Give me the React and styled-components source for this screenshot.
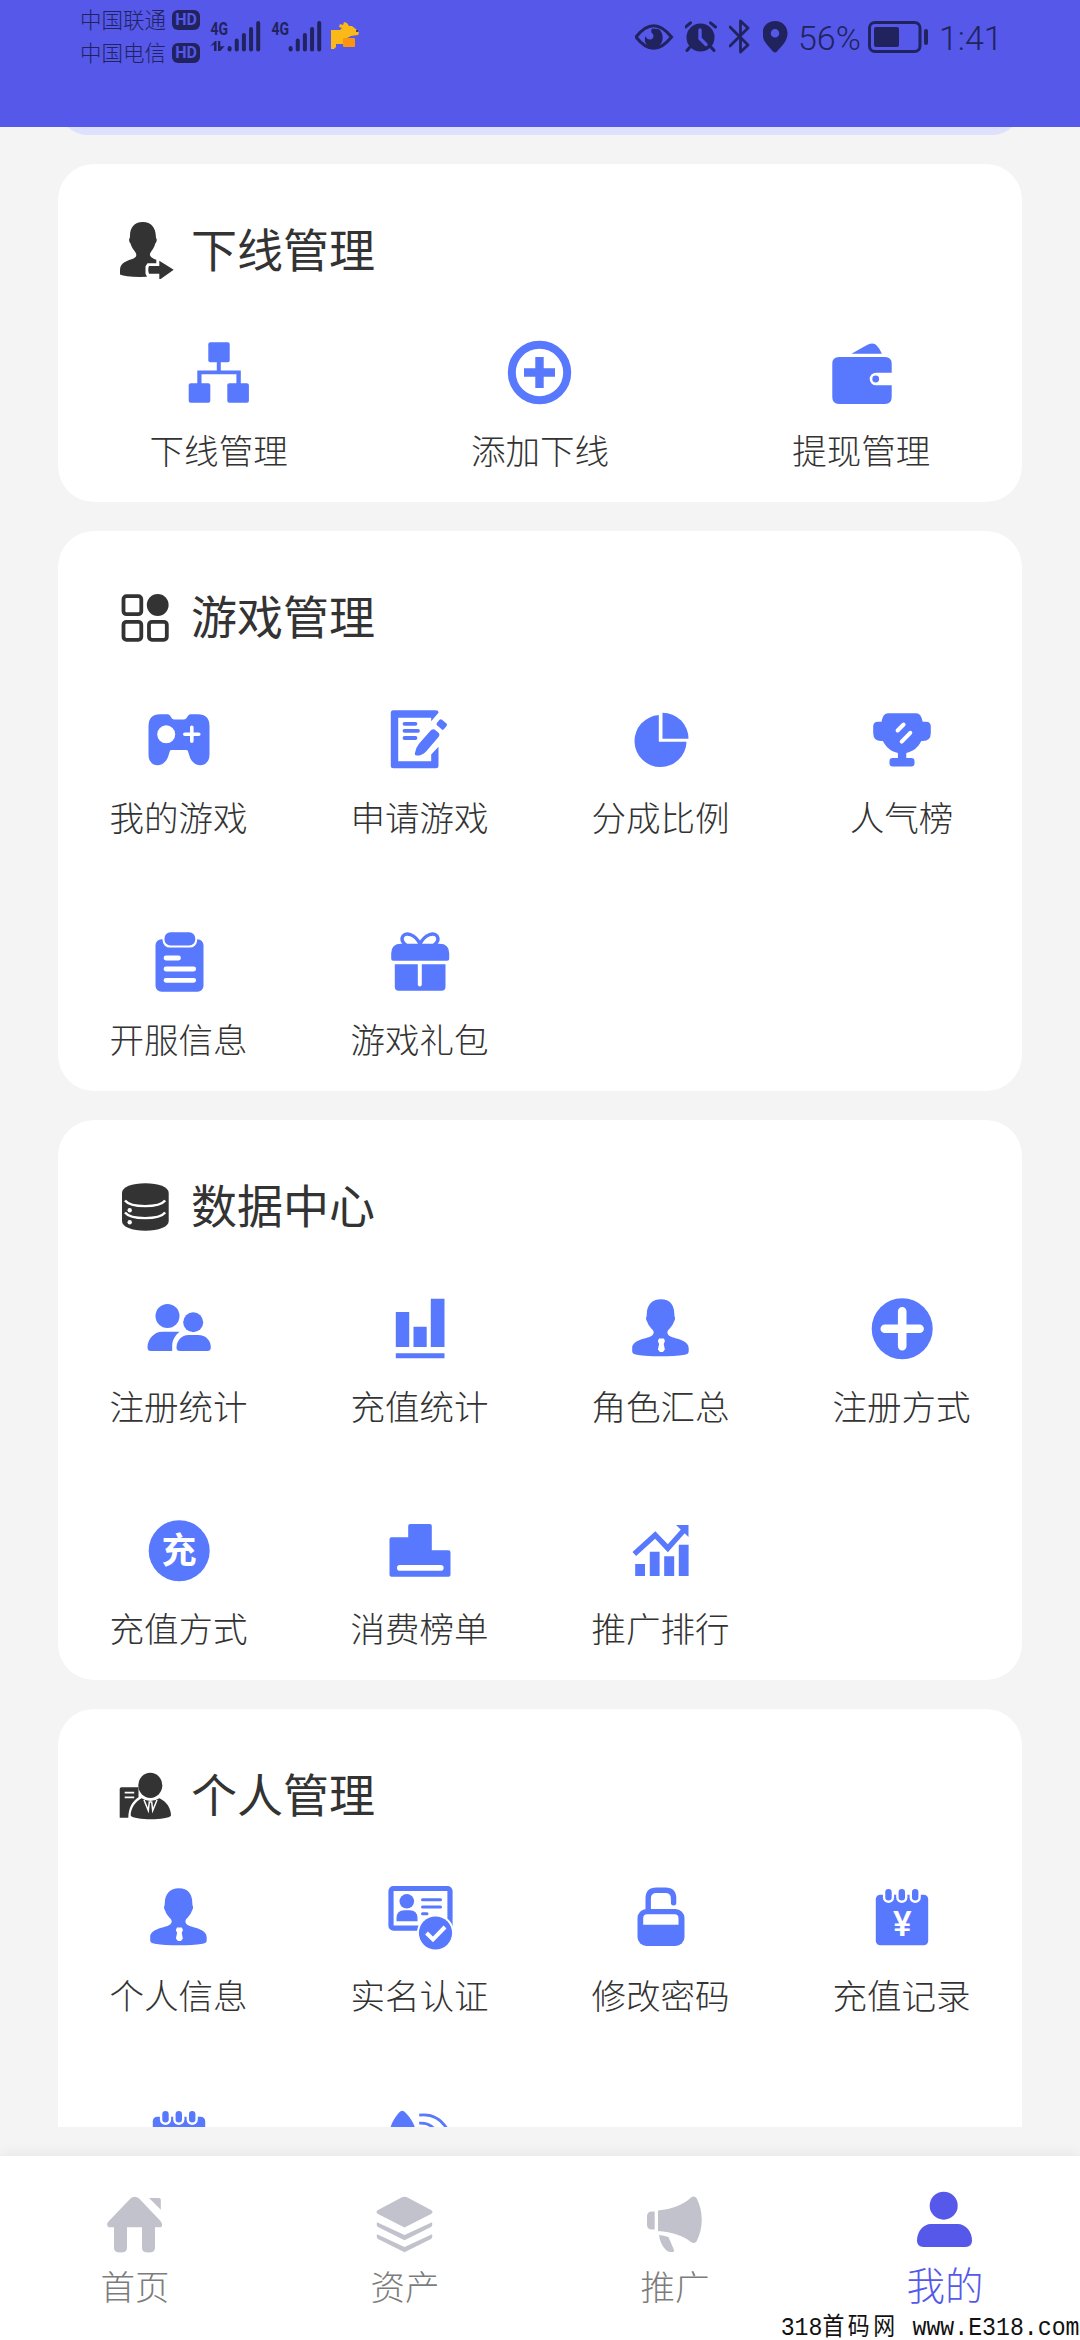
import styled, { createGlobalStyle, ThemeProvider } from 'styled-components'

const theme = {
  brand: '#5558e8',
  icon: '#5878fd',
  ink: '#333333',
  status: '#21235f',
  body: '#f4f4f4',
  muted: '#7c7c7c',
  tabIcon: '#c2c2cc'
}

const GlobalStyle = createGlobalStyle`
  * {
    box-sizing: border-box;
  }

  body {
    margin: 0;
    background: ${theme.body};
    font-family: 'Noto Sans CJK SC', sans-serif;
    color: ${theme.ink};
  }
`

const Screen = styled.div`
  display: flex;
  flex-direction: column;
  width: 1080px;
  height: 2340px;
  overflow: hidden;
`

const Header = styled.header`
  display: flex;
  flex: none;
  justify-content: space-between;
  align-items: flex-start;
  height: 127px;
  padding: 0 79px 0 80px;
  background: ${({ theme }) => theme.brand};
  color: ${({ theme }) => theme.status};
`

const StatusGroup = styled.div`
  display: flex;
  align-items: center;
  height: 73px;
`

const Carriers = styled.div`
  display: flex;
  flex-direction: column;
  margin-right: 10px;
`

const Carrier = styled.div`
  display: flex;
  align-items: center;
  gap: 6px;
  height: 33px;
  font-size: 21.5px;
  font-weight: 300;
  line-height: 30px;
  padding-bottom: 3px;
`

const Hd = styled.span`
  width: 28px;
  height: 20px;
  margin-top: 3px;
  border-radius: 6px;
  background: ${({ theme }) => theme.status};
  color: ${({ theme }) => theme.brand};
  font: 700 16px/20px Roboto, sans-serif;
  text-align: center;
`

const StatusText = styled.span`
  width: ${({ $width }) => $width}px;
  margin: 2px 6px 0 ${({ $gap }) => $gap}px;
  font: 300 34px/40px Roboto, sans-serif;
  white-space: nowrap;
`

const StatusSvg = styled.svg`
  flex: none;
  margin-right: ${({ $gap }) => $gap || 0}px;
  fill: ${({ theme }) => theme.status};
`

const Content = styled.main`
  display: flex;
  flex: none;
  flex-direction: column;
  gap: 29px;
  height: 2000px;
  padding: 0 58px;
  overflow: hidden;
`

// bottom edge of the balance card that is scrolled under the header
const ScrolledCard = styled.div`
  flex: none;
  height: 60px;
  margin-top: -52px;
  border-radius: 36px;
  background: #dde1fb;
`

const Card = styled.section`
  flex: none;
  border-radius: 36px;
  background: #fff;
`

const CardHead = styled.div`
  display: flex;
  align-items: center;
  gap: 17px;
  height: 116px;
  padding: 56px 58px 0;
`

const CardTitle = styled.h2`
  margin: 0;
  padding-bottom: 6px;
  font-size: 46px;
  font-weight: 400;
  line-height: 54px;
`

const HeadSvg = styled.svg`
  flex: none;
  width: 58px;
  height: 58px;
  fill: ${({ theme }) => theme.ink};
`

const Grid = styled.div`
  display: grid;
  grid-template-columns: repeat(${({ $columns }) => $columns}, 1fr);
  grid-auto-rows: 222px;
`

const Item = styled.a`
  display: flex;
  flex-direction: column;
  align-items: center;
  gap: 15px;
  padding-top: 57px;
`

const ItemSvg = styled.svg`
  flex: none;
  width: 72px;
  height: 72px;
  fill: ${({ theme }) => theme.icon};
`

const ItemLabel = styled.span`
  font-size: 34.56px;
  font-weight: 300;
  line-height: 50px;
  white-space: nowrap;
`

const TabBar = styled.nav`
  position: relative;
  display: grid;
  flex: none;
  grid-template-columns: repeat(4, 1fr);
  height: 184px;
  margin-top: 29px;
  background: #fff;
  box-shadow: 0 -2px 14px rgba(0, 0, 0, 0.06);
`

const Tab = styled.a`
  display: flex;
  flex-direction: column;
  align-items: center;
  padding-top: 34px;
  color: ${({ theme, $active }) => $active ? theme.brand : theme.muted};
  font-size: ${({ $active }) => $active ? 38.5 : 34.5}px;
  font-weight: 300;
  line-height: ${({ $active }) => $active ? 58 : 63}px;

  & svg {
    flex: none;
    width: 60px;
    height: 64px;
    fill: ${({ theme, $active }) => $active ? theme.brand : theme.tabIcon};
  }
`

const Watermark = styled.div`
  position: absolute;
  right: 1px;
  bottom: 0;
  display: flex;
  align-items: baseline;
  color: #111;
  font: 26.500px/24px 'Liberation Mono', monospace;
  white-space: pre;
  transform: scaleX(0.875);
  transform-origin: right;

  & b {
    font: 400 25px/24px 'Noto Sans CJK SC', sans-serif;
    letter-spacing: 4px;
  }
`

const BUST = 'M36 6.3c-9 0-14.2 6-14.2 14.5l-.2 2.6c-1 .8-.7 3.4.6 5.4 1.2 4 3.800 6.200 5.600 8.200 1.800 2.400.8 5.300-2.800 6.700-6 2.300-17.800 3.600-17.800 11.500v3c0 2.300 2 3 4.500 3.500 7 1.200 15 1.600 24 1.600s17-.4 24-1.600c2.500-.5 4-1.200 4-3.500v-3c0-7.900-11.800-9.200-17.600-11.500-3.600-1.400-4.600-4.300-2.800-6.700 1.800-2 4.400-4.200 5.600-8.200 1.300-2 1.600-4.600.6-5.400l-.2-2.600C49.300 12.300 45 6.300 36 6.300z'

function Bust () {
  return (
    <>
      <path d={BUST} />
      <path fill='#fff' d='M34 45.500h4.800l1.200 2.500-1.300 3 1.200 5.500-2 2.500h-3l-2-2.500 1.200-5.500-1.300-3z' />
    </>
  )
}

function Notepad () {
  return (
    <>
      <rect x='9.800' y='12.800' width='52.400' height='50.400' rx='4.500' />
      {[22.5, 35.8, 49.2].map(x => (
        <g key={x}>
          <rect x={x - 5.6} y='4' width='11.200' height='17' rx='5.600' fill='#fff' />
          <rect x={x - 3.2} y='7' width='6.400' height='11.500' rx='3.200' />
        </g>
      ))}
    </>
  )
}

const icons = {
  tree: (
    <>
      <rect x='25.300' y='5.300' width='21.400' height='20' rx='2' />
      <rect x='5.700' y='46.300' width='21.600' height='19.400' rx='2' />
      <rect x='44.300' y='46.300' width='21.600' height='19.400' rx='2' />
      <path d='M33.800 24h4v9.400h20V47h-4.400v-9.700H18.500V47h-4.200V33.400h19.500z' />
    </>
  ),
  plusRing: (
    <>
      <circle cx='35.500' cy='35.500' r='27.700' fill='none' stroke='#5878fd' strokeWidth='8' />
      <path d='M31.300 20h8.400v11.300H51v8.400H39.700V51h-8.400V39.700H20v-8.400h11.300z' />
    </>
  ),
  wallet: (
    <>
      <path d='M14 20h46q6.700 0 6.700 6.700v9H51a6.300 6.300 0 0 0 0 12.600h15.700V60q0 7-6.700 7H14q-6.700 0-6.700-7V26.700Q7.300 20 14 20z' />
      <circle cx='50.700' cy='42' r='3.400' />
      <path d='M26.400 16.800 42.500 7.800q6-2.800 9 .5 3 3 5.400 8.500z' />
    </>
  ),
  gamepad: (
    <>
      <path d='M17 10.300h7.500c3.500 0 3 5.200 7 5.200h9.200c4 0 3.500-5.200 7-5.200H55q11.500 0 11.500 12v28.500c0 13.500-17 14-20.300.5l-1.300-4.200q-.4-1.100-1.700-1.100H28.500q-1.300 0-1.600 1.100l-1.300 4.200C22 64.800 5.500 64.300 5.500 50.800V22.300q0-12 11.500-12z' />
      <circle cx='23.200' cy='30.300' r='9' fill='#fff' />
      <path d='M48.800 23.300v14M41.800 30.300h14' stroke='#fff' strokeWidth='3.600' strokeLinecap='round' />
    </>
  ),
  apply: (
    <>
      <path d='M9.300 6.300h42.500q3 0 2.700 2.400l-7.300 8.500v-3.500h-33v43.600h33V50.500l7.300-7.700v19q0 2.500-2.700 2.500H9.300q-2.500 0-2.500-2.500v-53q0-2.500 2.500-2.500z' />
      <path d='M20.500 19.800h11M20.500 26.800H34M20.500 34h11' stroke='#5878fd' strokeWidth='3.800' strokeLinecap='round' />
      <path d='M46.200 27q2.500-3 5.300-.8l3 2.600q1.800 1.700 0 4.200L42.300 47.200Q38 51.800 32.500 51.600q-2-.2-1.700-2.200.8-5.400 4-9.400z' />
      <path d='M55.500 15.800q1.200-1.200 2.500 0l4.500 3.800q1 1 .1 2.300l-2.800 3.300q-1 1-2.200 0L53 21.300q-1-1-.1-2.300z' />
    </>
  ),
  pie: (
    <>
      <path d='M33.800 11.100v26.600h27.700A26 26 0 1 1 33.800 11.100z' />
      <path d='M37.500 8.700a26 26 0 0 1 26 26h-26z' />
    </>
  ),
  trophy: (
    <>
      <path d='M22 9.300h28.400q4.500 0 6.300 8.400H60q4.800 0 4.800 4.800V29q0 8-8 8h-1.500c-3.500 7-8 10-15 12v5h5q3.200 0 3.200 3.200v2q0 3.200-3.200 3.200H26.700q-3.200 0-3.200-3.200v-2q0-3.200 3.200-3.200h5.200v-5c-6.500-1.500-11.500-5-15-12h-1.700q-8 0-8-8v-6.500q0-4.800 4.800-4.800h3.500q1.500-8.400 6.500-8.400z' />
      <path d='m31.600 26.500 6-6M35.700 37.600l8.600-8.800' stroke='#fff' strokeWidth='4' strokeLinecap='round' />
    </>
  ),
  clipboard: (
    <>
      <rect x='12.500' y='13.300' width='48' height='52.400' rx='6' />
      <rect x='19.500' y='4.300' width='34.700' height='17.300' rx='7.500' fill='#fff' />
      <rect x='21.500' y='6.300' width='30.700' height='13.200' rx='6' />
      <path d='M23 32h12.500M23 43h27.700M23 54.300h27.700' stroke='#fff' strokeWidth='4.800' strokeLinecap='round' />
    </>
  ),
  gift: (
    <>
      <path d='M17 17.700h38.500q9.700 0 9.700 9.700v5.300q0 2-2 2h-54q-2 0-2-2v-5.300q0-9.700 9.800-9.700z' />
      <path d='M10.800 38.300h23v20.700q2 3 4 0V38.300h23.700v22.400q0 4-4 4h-42.700q-4 0-4-4z' />
      <path d='M36 18C31 8 22 6 19 10q-3 4.500 3 9M36 18C41 8 50 6 53 10q3 4.500-3 9' fill='none' stroke='#5878fd' strokeWidth='3.400' />
    </>
  ),
  users: (
    <>
      <circle cx='24.500' cy='23' r='12' />
      <circle cx='50.200' cy='29.300' r='10' />
      <path d='M19.500 38.700h17.200c-4.500 3.500-7.500 8.300-7.500 14V58H8q-3.500 0-3.500-3.500c0-8 6-15.800 15-15.800z' />
      <path d='M45.500 42H55c8 0 12.800 5.500 12.800 12.500Q67.800 58 64 58H37q-3.500 0-3.500-3.500C33.500 48 38.500 42 45.500 42z' />
    </>
  ),
  bars: <path d='M11.800 19h13.400v35H11.800zM29.500 33.700h13.200V54H29.500zM46.800 5.700h13.700V54H46.800zM11.800 60.300h48.700v5H11.800z' />,
  bust: <Bust />,
  plusDisc: (
    <>
      <circle cx='36.200' cy='35.700' r='30.500' />
      <path d='M36.200 18.300v34.800M18.800 35.700h34.800' stroke='#fff' strokeWidth='8.600' strokeLinecap='round' />
    </>
  ),
  recharge: (
    <>
      <circle cx='36.200' cy='35.700' r='30.500' />
      <text x='36' y='48.200' textAnchor='middle' fontSize='35' fontWeight='700' fill='#fff'>充</text>
    </>
  ),
  podium: (
    <>
      <path d='M7.500 22.300h16.700V11q0-2 2-2h19.600q2 0 2 2v24.300h16.700q2 0 2 2v22.400q0 2-2 2h-57q-2 0-2-2V24.300q0-2 2-2z' />
      <path d='M15.800 52.900h41' stroke='#fff' strokeWidth='5.600' strokeLinecap='round' />
    </>
  ),
  trend: (
    <>
      <path d='M10.200 49h9.800v12h-9.800zM24.800 36.700h9.800V61h-9.800zM39.200 41.300h10V61h-10zM53.800 29.700h9.800V61h-9.800z' />
      <path d='m9.300 39 20.900-19 12.600 13.200L59 15' fill='none' stroke='#5878fd' strokeWidth='5.400' />
      <path d='M51 10h12.500v12z' />
    </>
  ),
  idCard: (
    <>
      <rect x='7' y='6.500' width='59' height='39.700' rx='2.500' fill='none' stroke='#5878fd' strokeWidth='5.200' />
      <circle cx='22.800' cy='19.300' r='7.300' />
      <path d='M12.500 39.300v-3q0-8 8-8h5q8 0 8 8v3z' />
      <path d='M38.500 17.700h18M38.500 25h18M38.500 31.700h4.500' stroke='#5878fd' strokeWidth='3' strokeLinecap='round' />
      <circle cx='51.500' cy='51' r='18.600' fill='#fff' />
      <circle cx='51.500' cy='51' r='16.600' />
      <path d='m42.500 51 6.500 6.500 12-12.500' fill='none' stroke='#fff' strokeWidth='4' />
    </>
  ),
  unlock: (
    <>
      <rect x='12.500' y='27' width='47' height='37' rx='9' />
      <path d='M18.200 42.700v-6.400q0-4 4-4h27.300q4 0 4 4v6.400z' fill='#fff' />
      <path d='M23.200 29V16.500q0-8.200 8.200-8.200h9q8.200 0 8.200 8.200v4.200' fill='none' stroke='#5878fd' strokeWidth='5.400' strokeLinecap='round' />
    </>
  ),
  bill: (
    <>
      <Notepad />
      <text x='36.400' y='54.300' textAnchor='middle' fontSize='35' fontWeight='500' fontFamily='Roboto' fill='#fff'>¥</text>
    </>
  ),
  notepad: <Notepad />,
  broadcast: (
    <>
      <path d='M18.200 6.700q2 0 4.300 3c5 5.500 8 10.500 9 16.300v14H6V26c1-6.500 4-11 8-16.300q2.200-3 4.200-3z' />
      <path d='M35.200 11.200C47 9.500 56 14 62.500 24M35.200 19.200c8-.5 13 2 17 8' fill='none' stroke='#5878fd' strokeWidth='2.800' />
    </>
  )
}

const headIcons = {
  referral: (
    <>
      <path d='M26.800 1C18 1 14 7 14 14.500l-.2 2.500c-1.200.8-.8 4 .7 5.500 1 4 3.500 6.500 5.300 9.500 1.500 3-.5 5-4.300 6.300C9 40.500 4 42.500 4 49.500v4q6 3 27 2.300l-1.500-3v-7.500l2-3h8.800v-3.500c-4.500-1.600-7.500-3.600-6-6.800 1.800-3 4-5.500 5-9.500 1.500-1.500 2-4.700.7-5.500l-.2-2.500C39.500 7 35.500 1 26.800 1z' />
      <path d='M33 45h10.300v-5.300l14.400 9-14.400 10.300v-6.300H33q-1.500-4 0-7.700z' />
    </>
  ),
  apps: (
    <>
      <g fill='none' stroke='#333' strokeWidth='3.800'>
        <rect x='7.500' y='8.200' width='17.800' height='18' rx='3' />
        <rect x='7.500' y='33.800' width='17.800' height='18' rx='3' />
        <rect x='33' y='33.800' width='17.800' height='18' rx='3' />
      </g>
      <circle cx='41.700' cy='17' r='10.900' />
    </>
  ),
  database: (
    <>
      <path d='M6 16C6 10 16 6.300 29.300 6.300S52.700 10 52.700 16v28c0 6-10 9.700-23.400 9.700S6 50 6 44z' />
      <path d='M9 23.500c6 7.500 34 7.500 40.200 0M9 35.500c6 7.500 34 7.500 40.200 0' fill='none' stroke='#fff' strokeWidth='2.400' />
      <circle cx='13.700' cy='33.300' r='2.200' fill='#fff' />
      <circle cx='13.700' cy='45.300' r='2.200' fill='#fff' />
    </>
  ),
  manager: (
    <>
      <path d='M5.500 21.300h17v10c-6 4-10 10-10.200 20.400H3.700V23q0-1.700 1.800-1.700z' />
      <path d='M8.700 26.700h9.500M8.700 31.300h9.500' stroke='#fff' strokeWidth='1.800' />
      <ellipse cx='34.300' cy='19.300' rx='12' ry='12.600' />
      <path d='M25.500 32.200q8.800 5.500 18 0C50.500 35.500 55 42 55 49.500 52 54.500 18 54.500 14.700 49.500c0-7.500 4.800-14 10.800-17.300z' />
      <path d='m28 34 4.300 10.500 1-8.500h2.400l1 8.500L41 34' fill='none' stroke='#fff' strokeWidth='1.500' />
    </>
  )
}

const tabIcons = {
  home: (
    <>
      <path d='M25.500 4.500q4.300-3.600 8.600 0L55.500 27q3 4 .5 6.300H50V54q0 4.500-6.500 4.500T37 54V33.300H22V54q0 4.500-6.500 4.500T9 54V33.300H3.500Q.5 30 4 27z' />
      <path d='M44 4h10q1.800 0 1.800 1.800v10z' />
    </>
  ),
  layers: (
    <>
      <path d='M26.500 3.500q3-1.400 6 0L56 16q3 2 0 4L29.500 33.500 3 20q-3-2 0-4z' />
      <path d='M2 28.300 29.500 41 57 28.300q1 3.700-1.500 5L29.500 46.300l-26-13Q1 32 2 28.300zM2 40.300 29.500 53 57 40.300q1 3.700-1.500 5L29.500 58.300l-26-13Q1 44 2 40.300z' />
    </>
  ),
  promote: (
    <>
      <path d='M9.700 17.500v18H7q-5 0-5-5v-8q0-5 5-5z' />
      <path d='M13 16.500C27 15.500 38 11 46 3.600q3.500-2.400 5.500.4c7 13.500 7 30 0 43.500q-2 2.500-5.500.5C38 41.500 27 38 13 37z' />
      <path d='M14 41q5 .3 9.500 2l5.500 13q.5 2-2 2-4 .6-6-2Q15 50 14 41z' />
    </>
  ),
  me: (
    <>
      <circle cx='28.700' cy='11.700' r='14' />
      <path d='M16 30h26.500C51 30 57 38 57 46.500q0 6.500-6.500 6.500h-42Q2 53 2 46.500C2 38 8 30 16 30z' />
    </>
  )
}

const sections = [
  {
    title: '下线管理',
    icon: 'referral',
    columns: 3,
    items: [['tree', '下线管理'], ['plusRing', '添加下线'], ['wallet', '提现管理']]
  },
  {
    title: '游戏管理',
    icon: 'apps',
    columns: 4,
    items: [
      ['gamepad', '我的游戏'], ['apply', '申请游戏'], ['pie', '分成比例'], ['trophy', '人气榜'],
      ['clipboard', '开服信息'], ['gift', '游戏礼包']
    ]
  },
  {
    title: '数据中心',
    icon: 'database',
    columns: 4,
    items: [
      ['users', '注册统计'], ['bars', '充值统计'], ['bust', '角色汇总'], ['plusDisc', '注册方式'],
      ['recharge', '充值方式'], ['podium', '消费榜单'], ['trend', '推广排行']
    ]
  },
  {
    title: '个人管理',
    icon: 'manager',
    columns: 4,
    items: [
      ['bust', '个人信息'], ['idCard', '实名认证'], ['unlock', '修改密码'], ['bill', '充值记录'],
      ['notepad', ''], ['broadcast', '']
    ]
  }
]

const tabs = [['home', '首页'], ['layers', '资产'], ['promote', '推广'], ['me', '我的']]

function Signal ({ data, gap }) {
  return (
    <StatusSvg width='52' height='33' viewBox='0 0 52 33' $gap={gap}>
      <text x='.5' y='14.500' fontFamily='Roboto' fontWeight='700' fontSize='17.500' textLength='17.500' lengthAdjust='spacingAndGlyphs'>4G</text>
      {data && <path d='M0 26.500 5 21h1.500v10H4v-6.500zM8 21h2.300v5.500l4.500-.5-4.500 5H8z' />}
      {[26, 18.5, 13, 7, 1].map((y, i) => (
        <rect key={y} x={17.6 + i * 7.15} y={y} width='4' height={31.5 - y} rx='2' />
      ))}
    </StatusSvg>
  )
}

function StatusBar () {
  return (
    <Header>
      <StatusGroup>
        <Carriers>
          <Carrier>中国联通<Hd>HD</Hd></Carrier>
          <Carrier>中国电信<Hd>HD</Hd></Carrier>
        </Carriers>
        <Signal data gap={9} />
        <Signal gap={7} />
        <StatusSvg width='30' height='30' viewBox='0 0 30 30'>
          <path fill='#fbb917' d='M1 8h9l2-2-3-1 1-3 3 1 1-3 3 1 2 3h3l5 4 2 3-1 2-7 1-6 3h8v3h-9v2H6v3l-2 2H1z' />
          <rect x='13' y='16' width='12' height='9' rx='1' fill='#fb9411' />
          <circle cx='27' cy='9' r='1' />
        </StatusSvg>
      </StatusGroup>
      <StatusGroup>
        <StatusSvg width='40' height='28' viewBox='0 0 40 28' $gap={10}>
          <path d='M1 14Q18.500-8.500 36.500 14 18.500 36.500 1 14z' fill='none' stroke='#21235f' strokeWidth='3' />
          <path d='M17 5.500q-2 3.500 1 5.500 1.500 4-2 5.500-4 .5-5.500-3.500-2 5 1.500 9 7 5 13 0c4.500-5 3-13-1.500-16z' />
        </StatusSvg>
        <StatusSvg width='33' height='32' viewBox='1 0 33 32' $gap={11}>
          <circle cx='16.500' cy='16.500' r='14' />
          <path d='m1.500 6 5-4.200M31.500 6l-5-4.200M6 26l-3 3.500M27 26l3 3.500' stroke='#21235f' strokeWidth='3' strokeLinecap='round' />
          <path d='M16 9v8.500l6 6' fill='none' stroke='#5558e8' strokeWidth='3.400' strokeLinecap='round' />
        </StatusSvg>
        <StatusSvg width='22' height='35' viewBox='1 0 22 35' $gap={12}>
          <path d='m2 8 18 18-7.500 7V2l7.500 7-18 18' fill='none' stroke='#21235f' strokeWidth='2.800' strokeLinejoin='round' strokeLinecap='round' />
        </StatusSvg>
        <StatusSvg width='26' height='32' viewBox='1 0 26 32'>
          <path fillRule='evenodd' d='M13 0C5.500 0 .5 5.500.5 12.500c0 8 6.500 13 10.500 18q2 2 4 0c4-5 10.500-10 10.500-18C25.500 5.500 20.500 0 13 0zm0 8a4 4 0 1 0 0 8.500A4 4 0 0 0 13 8z' />
        </StatusSvg>
        <StatusText $width={64} $gap={9}>56%</StatusText>
        <StatusSvg width='61' height='32' viewBox='0 0 61 32'>
          <rect x='1.500' y='1.500' width='50.500' height='29' rx='5.500' fill='none' stroke='#21235f' strokeWidth='3' />
          <rect x='6' y='6' width='25' height='20' rx='2' />
          <rect x='56' y='8' width='4' height='16' rx='2' />
        </StatusSvg>
        <StatusText $width={56} $gap={10}>1:41</StatusText>
      </StatusGroup>
    </Header>
  )
}

function Section ({ title, icon, columns, items }) {
  return (
    <Card>
      <CardHead>
        <HeadSvg viewBox='0 0 58 58'>{headIcons[icon]}</HeadSvg>
        <CardTitle>{title}</CardTitle>
      </CardHead>
      <Grid $columns={columns}>
        {items.map(([name, label]) => (
          <Item key={name}>
            <ItemSvg viewBox='0 0 72 72'>{icons[name]}</ItemSvg>
            <ItemLabel>{label}</ItemLabel>
          </Item>
        ))}
      </Grid>
    </Card>
  )
}

export default function App () {
  return (
    <ThemeProvider theme={theme}>
      <GlobalStyle />
      <Screen>
        <StatusBar />
        <Content>
          <ScrolledCard />
          {sections.map(section => <Section key={section.title} {...section} />)}
        </Content>
        <TabBar>
          {tabs.map(([name, label]) => (
            <Tab key={name} $active={name === 'me'}>
              <svg viewBox='0 -4 60 64'>{tabIcons[name]}</svg>
              {label}
            </Tab>
          ))}
          <Watermark>318<b>首码网</b> www.E318.com</Watermark>
        </TabBar>
      </Screen>
    </ThemeProvider>
  )
}
